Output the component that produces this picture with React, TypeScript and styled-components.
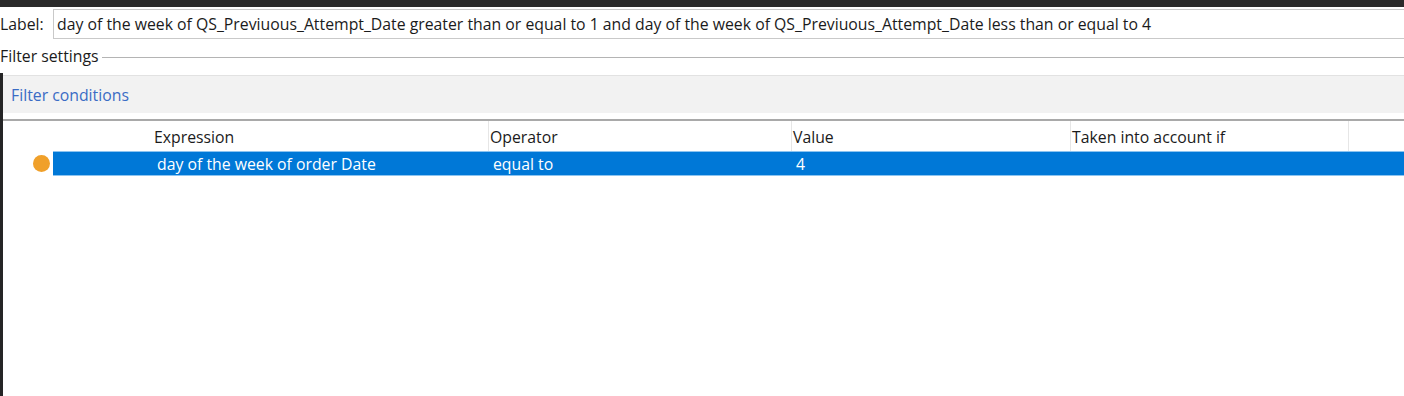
import React from "react";
import styled, { createGlobalStyle } from "styled-components";

const GlobalStyle = createGlobalStyle`
  html, body { margin: 0; padding: 0; background: #252526; }
  body { font-family: "Open Sans", "Noto Sans", "Liberation Sans", sans-serif; }
`;

const Window = styled.div`
  width: 1404px;
  height: 396px;
  background: #252526;
  display: flex;
  flex-direction: column;
  overflow: hidden;
`;

const TopBar = styled.div`
  height: 7px;
  flex: none;
  background: #2a2a2a;
`;

const Content = styled.div`
  flex: 1;
  background: #ffffff;
  display: flex;
  flex-direction: column;
  font-size: 15.8px;
  color: #1b1b1b;
`;

const LabelRow = styled.div`
  display: flex;
  align-items: center;
  height: 31px;
  padding-top: 1px;
`;

const LabelText = styled.span`
  width: 53px;
  flex: none;
  line-height: 20px;
`;

const LabelInput = styled.div`
  flex: 1;
  height: 28px;
  border: 1px solid #c9c9c9;
  border-right: none;
  display: flex;
  align-items: center;
  padding-left: 3px;
  white-space: nowrap;
  overflow: hidden;
`;

const Legend = styled.div`
  display: flex;
  align-items: center;
  height: 34px;
  gap: 3px;
`;

const LegendText = styled.span`
  flex: none;
`;

const LegendLine = styled.div`
  flex: 1;
  height: 1px;
  background: #b4b4b4;
  margin-top: 2px;
`;

const Lower = styled.div`
  flex: 1;
  border-left: 3px solid #252526;
  display: flex;
  flex-direction: column;
`;

const Panel = styled.div`
  height: 37px;
  background: #f2f2f2;
  border-top: 1px solid #e2e2e2;
  display: flex;
  align-items: center;
  padding-left: 8px;
  margin-top: 2px;
`;

const PanelLink = styled.span`
  color: #3a6cc5;
`;

const TableRule = styled.div`
  height: 2px;
  margin-top: 6px;
  background: #a9a9a9;
`;

const HeaderRow = styled.div`
  display: grid;
  grid-template-columns: 150px 336px 303px 279px 278px 1fr;
  height: 30px;
`;

const HeaderCell = styled.div<{ $sep?: boolean }>`
  display: flex;
  align-items: center;
  padding-left: 1px;
  padding-top: 2px;
  border-right: ${(p) => (p.$sep ? "1px solid #e6e6e6" : "none")};
  white-space: nowrap;
`;

const DataRow = styled.div`
  display: flex;
  height: 25px;
`;

const Indicator = styled.div`
  width: 50px;
  flex: none;
  display: flex;
  align-items: center;
  padding-left: 30px;
  box-sizing: border-box;
`;

const Dot = styled.span`
  width: 17px;
  height: 17px;
  border-radius: 50%;
  background: #f0a02a;
`;

const Selected = styled.div`
  flex: 1;
  display: grid;
  grid-template-columns: 100px 336px 303px 279px 278px 1fr;
  background: #0078d7;
  border-top: 1px solid #8cc4f0;
  border-bottom: 1px solid #8cc4f0;
  color: #ffffff;
`;

const DataCell = styled.div`
  display: flex;
  align-items: center;
  padding-left: 4px;
  white-space: nowrap;
`;

const headers = ["", "Expression", "Operator", "Value", "Taken into account if", ""];
const cells = ["", "day of the week of order Date", "equal to", "4", "", ""];

export default function App() {
  return (
    <>
      <GlobalStyle />
      <Window>
        <TopBar />
        <Content>
          <LabelRow>
            <LabelText>Label:</LabelText>
            <LabelInput>
              day of the week of QS_Previuous_Attempt_Date greater than or equal to 1 and day of the week of
              QS_Previuous_Attempt_Date less than or equal to 4
            </LabelInput>
          </LabelRow>
          <Legend>
            <LegendText>Filter settings</LegendText>
            <LegendLine />
          </Legend>
          <Lower>
            <Panel>
              <PanelLink>Filter conditions</PanelLink>
            </Panel>
            <TableRule />
            <HeaderRow>
              {headers.map((h, i) => (
                <HeaderCell key={i} $sep={i > 0 && i < 5}>
                  {h}
                </HeaderCell>
              ))}
            </HeaderRow>
            <DataRow>
              <Indicator>
                <Dot />
              </Indicator>
              <Selected>
                {cells.map((c, i) => (
                  <DataCell key={i}>{c}</DataCell>
                ))}
              </Selected>
            </DataRow>
          </Lower>
        </Content>
      </Window>
    </>
  );
}
